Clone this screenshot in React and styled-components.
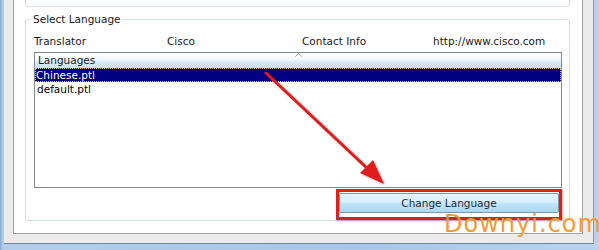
import React from 'react';
import styled, { createGlobalStyle } from 'styled-components';

const Global = createGlobalStyle`
  html, body { margin: 0; padding: 0; background: #fff; }
  body {
    font-family: "DejaVu Sans", Tahoma, sans-serif;
    font-size: 10.5px;
    color: #000;
  }
`;

const Frame = styled.div`
  position: relative;
  width: 599px;
  height: 250px;
  box-sizing: border-box;
  display: flex;
  flex-direction: column;
  padding: 0 5px 6px 4px;
  background: linear-gradient(90deg, #86a9cf 0, #b3cde9 3px, #a9c6e6 60%, #b9d3ee 100%);
  overflow: hidden;
`;

const Chrome = styled.div`
  flex: 1;
  display: flex;
  flex-direction: column;
  background: #ebebeb;
  border-right: 1px solid #8d99a6;
  border-bottom: 1px solid #6f87a3;
  padding: 0 10px 9px 9px;
`;

const Content = styled.div`
  flex: 1;
  display: flex;
  flex-direction: column;
  background: #fff;
  border: 1px solid #a3a3a3;
  border-top: none;
  padding: 0 12px 12px 11px;
`;

const PrevGroup = styled.div`
  flex: none;
  height: 6px;
  border: 1px solid #d5dfe5;
  border-top: none;
  border-radius: 0 0 3px 3px;
`;

const Group = styled.fieldset`
  flex: 1;
  min-width: 0;
  margin: 6px 0 0;
  border: 1px solid #d5dfe5;
  border-radius: 3px;
  padding: 0 7px 0 8px;
  display: flex;
  flex-direction: column;
`;

const Legend = styled.legend`
  padding: 0 2px;
  margin-left: -3px;
  line-height: 13px;
  color: #1a1a1a;
`;

const InfoRow = styled.div`
  display: grid;
  grid-template-columns: 133px 135px 131px 1fr;
  height: 13px;
  line-height: 13px;
  margin: 9px 0 4px;
  color: #1a1a1a;
`;

const List = styled.div`
  box-sizing: border-box;
  height: 136px;
  border: 1px solid #828790;
  background: #fff;
  flex: none;
`;

const Header = styled.div`
  position: relative;
  height: 15px;
  line-height: 15px;
  padding-left: 3px;
  color: #1a1a1a;
  background: linear-gradient(#ffffff 0%, #f4f9fd 40%, #d9ebf8 60%, #c5e1f4 100%);
`;

const Caret = styled.svg`
  position: absolute;
  top: 0;
  left: 50%;
  margin-left: -3px;
`;

const Row = styled.div`
  height: 14px;
  line-height: 14px;
  padding-left: ${p => (p.$selected ? 1 : 2)}px;
  background: ${p => (p.$selected ? '#000080' : 'transparent')};
  color: ${p => (p.$selected ? '#fff' : '#000')};
  outline: ${p => (p.$selected ? '1px dotted #c9c98a' : 'none')};
  outline-offset: -1px;
`;

const ButtonArea = styled.div`
  display: flex;
  justify-content: flex-end;
  margin-top: 1px;
`;

const Highlight = styled.div`
  border: 3px solid #d8231c;
  padding: 1px 0 4px;
  background: #fff;
  box-shadow: 1px 1px 2px rgba(120, 0, 0, 0.35);
`;

const Button = styled.button`
  display: block;
  box-sizing: border-box;
  width: 220px;
  height: 20px;
  margin: 0;
  padding: 0;
  font: inherit;
  color: #1e2a36;
  border: 1px solid #7f98b2;
  border-radius: 2px;
  background: linear-gradient(#e6f3fc 0%, #d8eefb 45%, #c1e3f8 55%, #aad8f4 100%);
`;

const Watermark = styled.span`
  position: absolute;
  left: 444px;
  top: 212px;
  display: block;
  white-space: nowrap;
  font-family: "DejaVu Sans", sans-serif;
  font-size: 24px;
  line-height: 24px;
  letter-spacing: 1px;
  color: #f59a35;
  pointer-events: none;
`;

const Overlay = styled.svg`
  position: absolute;
  left: 0;
  top: 0;
  pointer-events: none;
`;

export default function App() {
  return (
    <>
      <Global />
      <Frame>
        <Chrome>
          <Content>
            <PrevGroup />
            <Group>
              <Legend>Select Language</Legend>
              <InfoRow>
                <span>Translator</span>
                <span>Cisco</span>
                <span>Contact Info</span>
                <span>http://www.cisco.com</span>
              </InfoRow>
              <List>
                <Header>
                  Languages
                  <Caret width="7" height="4" viewBox="0 0 7 4">
                    <path d="M0.5 3.5 L3.5 0.5 L6.5 3.5" fill="none" stroke="#8aa3b8" strokeWidth="1" />
                  </Caret>
                </Header>
                <Row $selected>Chinese.ptl</Row>
                <Row>default.ptl</Row>
              </List>
              <ButtonArea>
                <Highlight>
                  <Button>Change Language</Button>
                </Highlight>
              </ButtonArea>
            </Group>
          </Content>
        </Chrome>
        <Overlay width="599" height="250" viewBox="0 0 599 250">
          <defs>
            <filter id="sh" x="-10%" y="-10%" width="130%" height="130%">
              <feDropShadow dx="1" dy="1" stdDeviation="1" floodColor="#600" floodOpacity="0.35" />
            </filter>
          </defs>
          <g filter="url(#sh)">
            <line x1="266" y1="73" x2="368" y2="169" stroke="#e01b1b" strokeWidth="3" strokeLinecap="round" />
            <polygon points="384,184 360,173 373,160" fill="#e01b1b" />
          </g>
        </Overlay>
        <Watermark>Downyi.com</Watermark>
      </Frame>
    </>
  );
}
